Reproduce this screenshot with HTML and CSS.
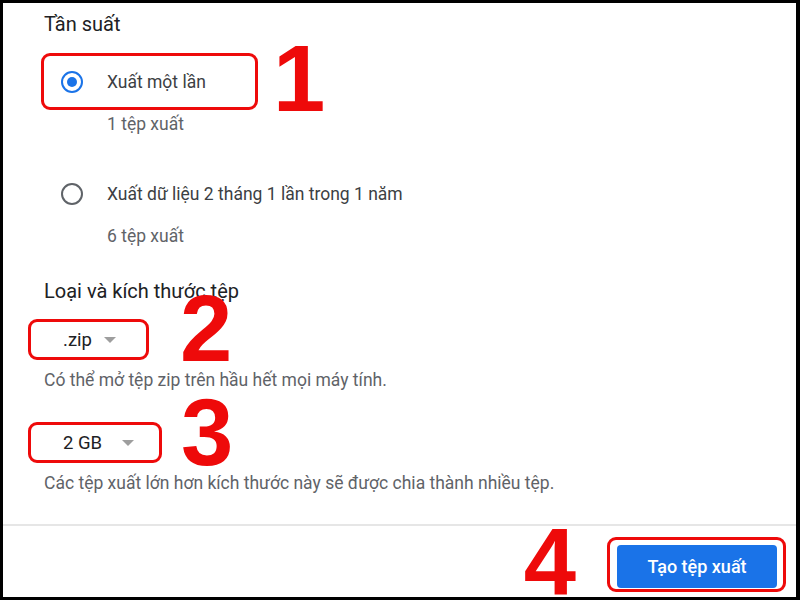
FILE: index.html
```html
<!DOCTYPE html>
<html lang="vi">
    <head>
        <meta charset="utf-8">
        <meta name="viewport" content="width=device-width,initial-scale=1" />
        <title>Tạo tệp xuất</title>
        <link rel="stylesheet" href="styles.css">
    </head>
    <body>
        <div class="frame">
            <div class="content">
                <h2 class="title">Tần suất</h2>
                <div class="option mark mark-1">
                    <span class="radio checked"></span>
                    <span class="label">Xuất một lần</span>
                    <span class="num num-1">1</span>
                </div>
                <p class="sub">1 tệp xuất</p>
                <div class="option">
                    <span class="radio"></span>
                    <span class="label">Xuất dữ liệu 2 tháng 1 lần trong 1 năm</span>
                </div>
                <p class="sub">6 tệp xuất</p>

                <h2 class="title title-2">Loại và kích thước tệp</h2>
                <div class="select mark select-zip">
                    <span class="value">.zip</span>
                    <span class="arrow"></span>
                    <span class="num num-2">2</span>
                </div>
                <p class="hint">Có thể mở tệp zip trên hầu hết mọi máy tính.</p>
                <div class="select mark select-size">
                    <span class="value">2 GB</span>
                    <span class="arrow"></span>
                    <span class="num num-3">3</span>
                </div>
                <p class="hint">Các tệp xuất lớn hơn kích thước này sẽ được chia thành nhiều tệp.</p>
            </div>
            <div class="footer">
                <span class="num-4">4</span>
                <div class="btn-mark">
                    <button class="btn">Tạo tệp xuất</button>
                </div>
            </div>
        </div>
    </body>
</html>
```

FILE: styles.css
```css
html, body{
    margin: 0;
    padding: 0;
    background: #000;
}
.frame{
    width: 800px;
    height: 600px;
    box-sizing: border-box;
    border-style: solid;
    border-color: #000;
    border-width: 3px 4px 3px 3px;
    background: #fff;
    overflow: hidden;
    display: flex;
    flex-direction: column;
    font-family: Roboto, "Noto Sans", sans-serif;
}
.content{
    flex: 1;
    padding: 9px 0 0 41px;
}

.title{
    margin: 0;
    font-size: 20px;
    font-weight: 400;
    line-height: 24px;
    color: #202124;
}
.title-2{
    margin-top: 33px;
}

.option{
    display: flex;
    align-items: center;
    height: 57px;
    box-sizing: border-box;
    padding-left: 17px;
    margin-top: 31px;
}
.mark{
    position: relative;
    border: 3px solid #ee0a0a;
    border-radius: 9px;
}
.mark-1{
    width: 217px;
    margin-left: -3px;
    margin-top: 17px;
}
.radio{
    width: 22px;
    height: 22px;
    box-sizing: border-box;
    border: 2px solid #5f6368;
    border-radius: 50%;
    display: flex;
    align-items: center;
    justify-content: center;
}
.radio.checked{
    border-color: #1a73e8;
}
.radio.checked::after{
    content: "";
    width: 10px;
    height: 10px;
    border-radius: 50%;
    background: #1a73e8;
}
.label{
    margin-left: 24px;
    font-size: 17.5px;
    color: #3c4043;
}
.sub{
    margin: 4px 0 0 63px;
    font-size: 17.5px;
    line-height: 20px;
    color: #5f6368;
}

.select{
    display: flex;
    align-items: center;
    height: 41px;
    box-sizing: border-box;
    margin-left: -16px;
    margin-top: 16px;
    padding-left: 32px;
    font-size: 18.5px;
    color: #202124;
}
.select-zip{
    width: 121px;
}
.select-zip .value{
    width: 41px;
}
.select-size{
    width: 134px;
    margin-top: 32px;
}
.select-size .value{
    width: 59px;
}
.arrow{
    width: 0;
    height: 0;
    border-left: 6px solid transparent;
    border-right: 6px solid transparent;
    border-top: 6px solid #9e9e9e;
}
.hint{
    margin: 10px 0 0 0;
    font-size: 17.5px;
    line-height: 20px;
    color: #5f6368;
}

.num, .num-4{
    font-family: "Liberation Sans", Arial, sans-serif;
    font-weight: bold;
    font-size: 94px;
    line-height: 94px;
    color: #ee0a0a;
}
.num{
    position: absolute;
    bottom: -19px;
}
.num-1{
    left: 229px;
}
.num-2{
    left: 149px;
}
.num-3{
    left: 150px;
    bottom: -20px;
}

.footer{
    height: 71px;
    border-top: 2px solid #e6e6e6;
    display: flex;
    justify-content: flex-end;
    align-items: flex-start;
    padding-right: 10px;
}
.num-4{
    margin-top: -11px;
    margin-right: 31px;
}
.btn-mark{
    margin-top: 11px;
    border: 3px solid #ee0a0a;
    border-radius: 9px;
    padding: 5px 6px 1px 7px;
}
.btn{
    display: block;
    width: 160px;
    height: 43px;
    border: none;
    border-radius: 4px;
    background: #1a73e8;
    color: #fff;
    font-family: Roboto, "Noto Sans", sans-serif;
    font-size: 18px;
    font-weight: 500;
}
```
